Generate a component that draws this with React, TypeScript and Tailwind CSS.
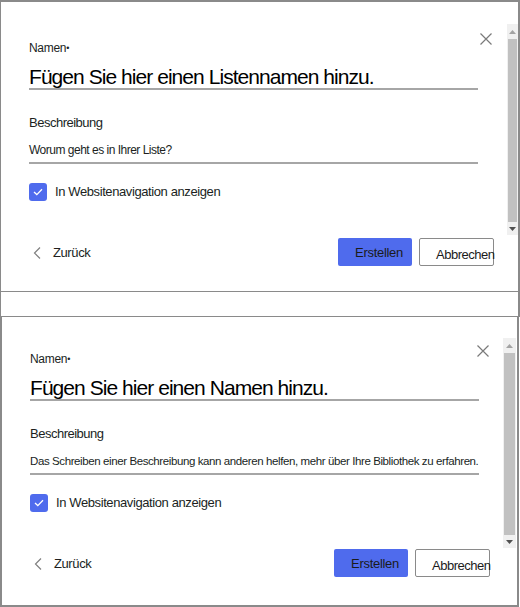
type PanelProps = {
  title: string;
  description: string;
  descClass: string;
  top: number;
};

function Scrollbar({ className }: { className: string }) {
  return (
    <div className={"flex flex-col bg-[#f0f0f0] " + className}>
      <div className="h-[15px] flex items-center justify-center">
        <svg width="7" height="4" viewBox="0 0 7 4">
          <path d="M0 4 L3.5 0 L7 4 Z" fill="#a3a3a3" />
        </svg>
      </div>
      <div className="flex-1 mx-[1px] bg-[#c1c1c1]" />
      <div className="h-[13px] flex items-center justify-center">
        <svg width="7" height="4" viewBox="0 0 7 4">
          <path d="M0 0 L3.5 4 L7 0 Z" fill="#505050" />
        </svg>
      </div>
    </div>
  );
}

function Panel({ title, description, descClass, top }: PanelProps) {
  const first = top === 0;
  return (
    <div className="flex flex-col text-[#201f1e]">
      <div className="relative flex">
        <div className={"flex-1 pl-[28px] " + (first ? "pt-[38px]" : "pt-[34px]")}>
          <div className="w-[449px]">
            <div className="text-[12px] leading-[16px] tracking-[-0.3px]">
              Namen<span className="text-[9px] align-top">•</span>
            </div>
            <div className="mt-[9px] border-b-2 border-[#a6a6a6] text-[21px] leading-[23px] text-black tracking-[-0.95px]">
              {title}
            </div>
            <div className="mt-[24px] text-[13px] leading-[18px] tracking-[-0.5px]">Beschreibung</div>
            <div className={"mt-[9px] border-b-2 border-[#a6a6a6] pb-[3px] leading-[18px] " + descClass}>
              {description}
            </div>
            <div className="mt-[18px] flex items-center gap-[8px]">
              <div className="w-[18px] h-[18px] rounded-[3px] bg-[#4f6bed] flex items-center justify-center">
                <svg width="10" height="8" viewBox="0 0 10 8">
                  <path d="M1 4 L3.8 6.6 L9 1.2" stroke="#fff" strokeWidth="1.3" fill="none" />
                </svg>
              </div>
              <span className="text-[13px] tracking-[-0.4px]">In Websitenavigation anzeigen</span>
            </div>
          </div>
        </div>
        <svg
          width="12"
          height="12"
          viewBox="0 0 12 12"
          className={"absolute " + (first ? "top-[31px] right-[26px]" : "top-[28px] right-[28px]")}
        >
          <path d="M0.5 0.5 L11.5 11.5 M11.5 0.5 L0.5 11.5" stroke="#7a7a7a" strokeWidth="1.2" />
        </svg>
        <Scrollbar className={first ? "mt-[22px] w-[11px] h-[211px]" : "mt-[21px] w-[13px] h-[210px] mr-[1px]"} />
      </div>
      <div className={"flex items-center justify-between pl-[32px] " + (first ? "mt-[3px] pr-[24px]" : "mt-[1px] pr-[27px]")}>
        <div className="flex items-center gap-[12px] pt-[2px] text-[13px] tracking-[-0.4px]">
          <svg width="8" height="12" viewBox="0 0 8 12">
            <path d="M7 0.5 L1.5 6 L7 11.5" stroke="#808080" strokeWidth="1.2" fill="none" />
          </svg>
          <span>Zurück</span>
        </div>
        <div className="flex gap-[7px]">
          <button className="w-[74px] h-[28px] rounded-[2px] bg-[#4f6bed] text-[13px] tracking-[-0.3px] text-[#1b1b1b] pl-[8px] pt-[2px]">
            Erstellen
          </button>
          <button className="w-[75px] h-[28px] rounded-[2px] border border-[#8a8a8a] bg-white text-[13px] tracking-[-0.5px] text-[#1b1b1b] pl-[16px] pt-[5px] text-left whitespace-nowrap">
            Abbrechen
          </button>
        </div>
      </div>
    </div>
  );
}

export default function App() {
  return (
    <div className="w-[520px] h-[607px] bg-white font-['Liberation_Sans',sans-serif] overflow-hidden">
      <div className="h-[317px] border-t-2 border-l border-r-2 border-b border-[#8a8a8a]">
        <div className="h-[290px] border-b border-[#8a8a8a]">
          <Panel
            top={0}
            title="Fügen Sie hier einen Listennamen hinzu."
            description="Worum geht es in Ihrer Liste?"
            descClass="text-[12px] tracking-[-0.5px]"
          />
        </div>
      </div>
      <div className="w-[519px] h-[290px] border-l-2 border-r-2 border-b-2 border-[#8a8a8a]">
        <Panel
          top={1}
          title="Fügen Sie hier einen Namen hinzu."
          description="Das Schreiben einer Beschreibung kann anderen helfen, mehr über Ihre Bibliothek zu erfahren."
          descClass="text-[11.5px] tracking-[-0.4px] whitespace-nowrap"
        />
      </div>
    </div>
  );
}
